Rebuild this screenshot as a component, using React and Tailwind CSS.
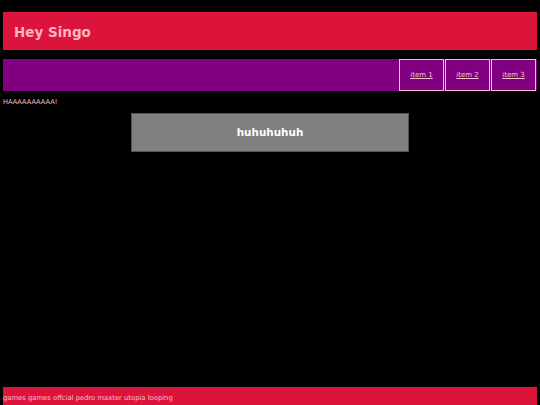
export default function App() {
  return (
    <div className="bg-black min-h-[405px] h-[405px] px-[3px] flex flex-col overflow-hidden font-['DejaVu_Sans',sans-serif]">
      <header className="mt-[12px] h-[38px] bg-[#dc143c] flex items-center px-[11px] shrink-0">
        <h1 className="text-[13.5px] font-bold text-[#ffb6c1] mt-[2px]">Hey Singo</h1>
      </header>

      <nav className="mt-[9px] h-[32px] bg-[#800080] flex justify-end shrink-0 pr-px">
        <ul className="flex gap-[1px] h-full">
          {['item 1', 'item 2', 'item 3'].map((item) => (
            <li key={item} className="w-[45px] h-full border-[1.5px] border-[#ffc0cb] flex items-center justify-center">
              <a href="#" className="text-[7px] text-[#ffc0cb] underline">{item}</a>
            </li>
          ))}
        </ul>
      </nav>

      <main className="flex-1">
        <p className="mt-[6px] text-[6.6px] leading-[10px] text-[#ffc0cb]">HAAAAAAAAAA!</p>
        <div className="mt-[6px] mx-auto w-[278px] h-[39px] bg-[#808080] border border-[#555] flex items-center justify-center">
          <span className="text-[10.4px] font-bold text-white">huhuhuhuh</span>
        </div>
      </main>

      <footer className="h-[18px] bg-[#dc143c] shrink-0 pt-[6px]">
        <p className="text-[6.8px] leading-[10px] text-[#ffc0cb]">games games offcial pedro maxter utopia looping</p>
      </footer>
    </div>
  )
}
